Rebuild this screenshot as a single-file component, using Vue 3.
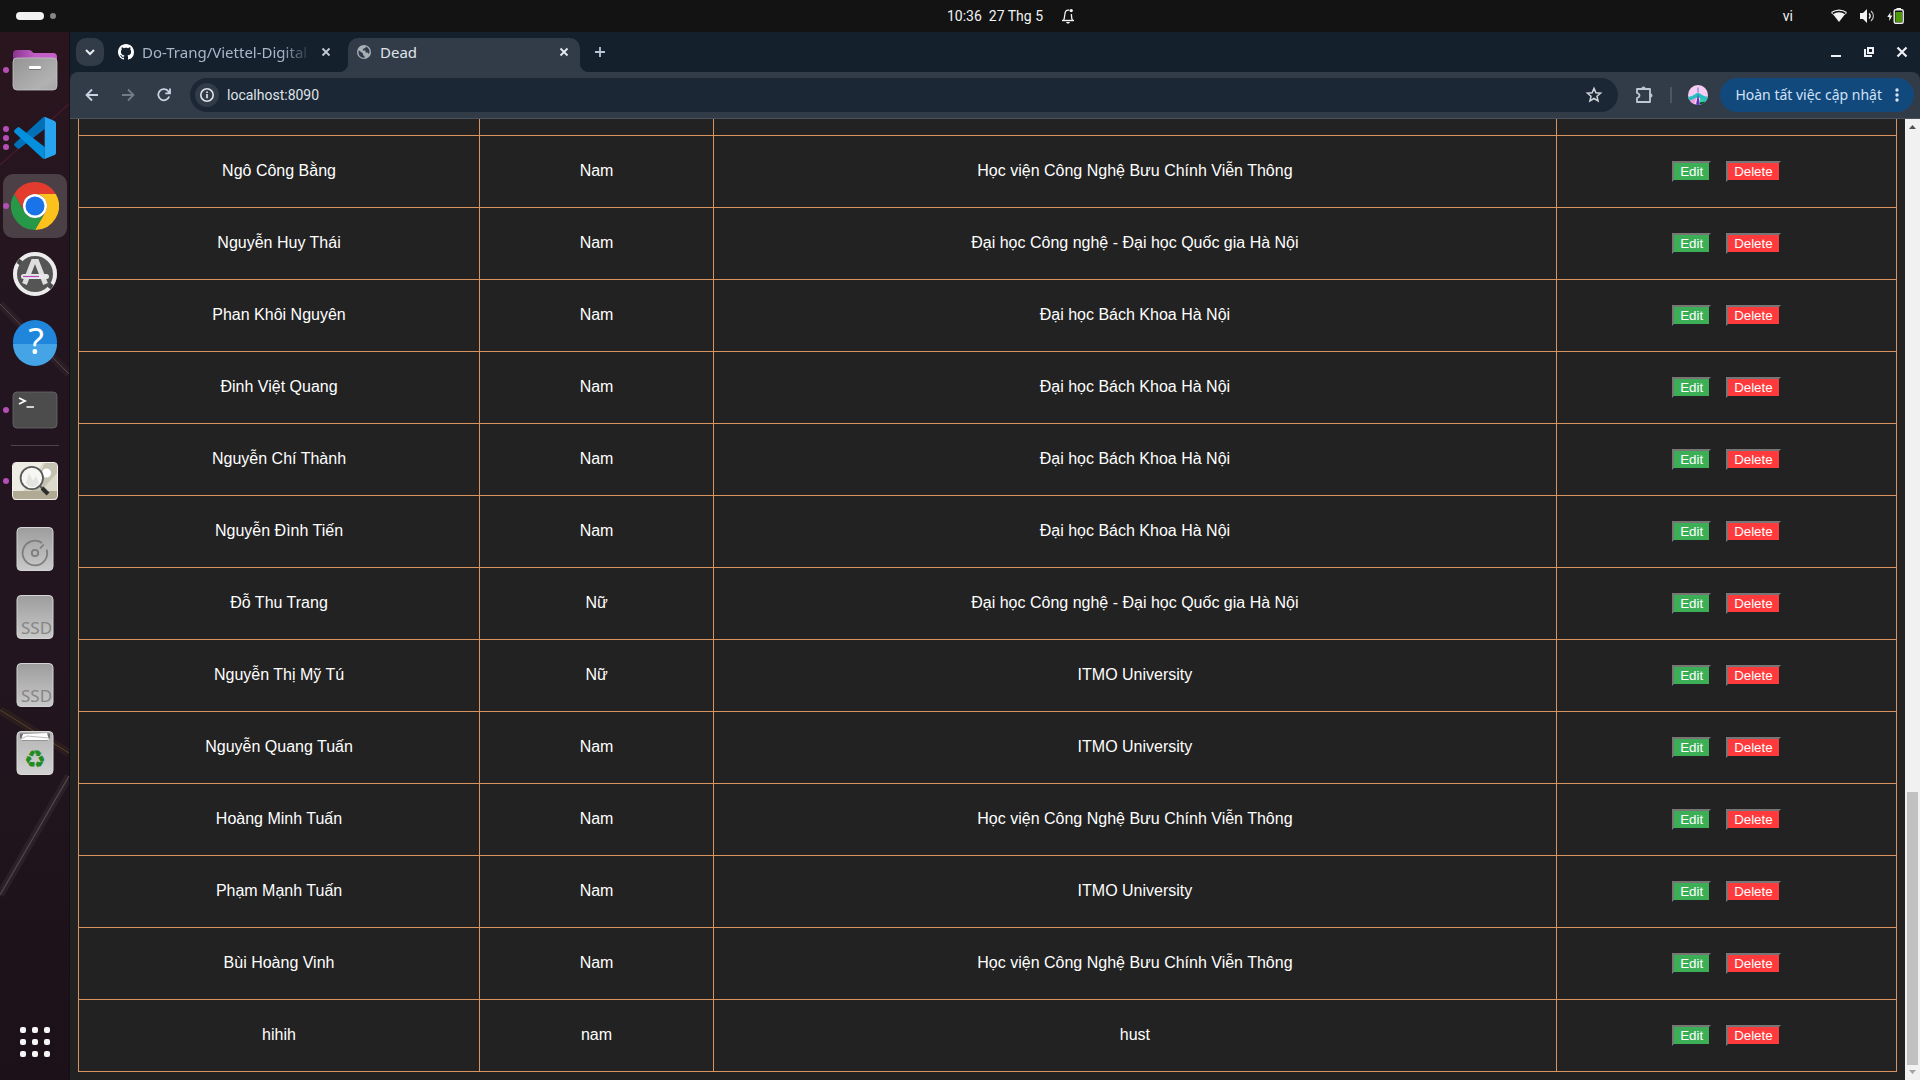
<script setup>
const people = [
  { name: 'Ngô Công Bằng', gender: 'Nam', school: 'Học viện Công Nghệ Bưu Chính Viễn Thông' },
  { name: 'Nguyễn Huy Thái', gender: 'Nam', school: 'Đại học Công nghệ - Đại học Quốc gia Hà Nội' },
  { name: 'Phan Khôi Nguyên', gender: 'Nam', school: 'Đại học Bách Khoa Hà Nội' },
  { name: 'Đinh Việt Quang', gender: 'Nam', school: 'Đại học Bách Khoa Hà Nội' },
  { name: 'Nguyễn Chí Thành', gender: 'Nam', school: 'Đại học Bách Khoa Hà Nội' },
  { name: 'Nguyễn Đình Tiến', gender: 'Nam', school: 'Đại học Bách Khoa Hà Nội' },
  { name: 'Đỗ Thu Trang', gender: 'Nữ', school: 'Đại học Công nghệ - Đại học Quốc gia Hà Nội' },
  { name: 'Nguyễn Thị Mỹ Tú', gender: 'Nữ', school: 'ITMO University' },
  { name: 'Nguyễn Quang Tuấn', gender: 'Nam', school: 'ITMO University' },
  { name: 'Hoàng Minh Tuấn', gender: 'Nam', school: 'Học viện Công Nghệ Bưu Chính Viễn Thông' },
  { name: 'Phạm Mạnh Tuấn', gender: 'Nam', school: 'ITMO University' },
  { name: 'Bùi Hoàng Vinh', gender: 'Nam', school: 'Học viện Công Nghệ Bưu Chính Viễn Thông' },
  { name: 'hihih', gender: 'nam', school: 'hust' },
]
</script>

<template>
  <div class="desktop">
    <header class="topbar">
      <div class="workspaces"><span class="pill"></span><span class="dot"></span></div>
      <div class="clock">
        <span>10:36&nbsp; 27 Thg 5</span>
        <svg width="14" height="16" viewBox="0 0 14 16" fill="none" stroke="#f2f2f2" stroke-width="1">
          <path d="M1 12.5h12" stroke-width="1.4" />
          <path d="M2.6 12C4.2 10 3.2 5 4.8 3.2C5.8 2 7 2 8.2 2.2M11.4 12C10.3 10.5 10.6 8 10.4 6" stroke-width="1.3" />
          <circle cx="10.2" cy="2.6" r="1.7" fill="#f2f2f2" stroke="none" />
          <path d="M5 14h4l-1 1.6H6z" fill="#f2f2f2" stroke="none" />
        </svg>
      </div>
      <div class="status">
        <span class="lang">vi</span>
        <svg width="16" height="14" viewBox="0 0 16 14">
          <path d="M0.5 3.6C5 .2 11 .2 15.5 3.6" fill="none" stroke="#f2f2f2" stroke-width="1.3" />
          <path d="M2 5.3C5.500 2.600 10.500 2.600 14 5.300L8 13z" fill="#f2f2f2" />
          <path d="M.3 3.600L2.300 5.600M15.700 3.600L13.700 5.600" stroke="#f2f2f2" />
        </svg>
        <svg class="volume" width="15" height="14" viewBox="0 0 15 14">
          <path d="M0 4h3l4-4v14L3 10H0z" fill="#f2f2f2" />
          <path d="M9 4.500c1.400 1.500 1.400 3.500 0 5" fill="none" stroke="#f2f2f2" stroke-width="1.4" />
          <path d="M11 2c3.200 3 3.200 7 0 10" fill="none" stroke="#bdbdbd" stroke-width="1.2" />
        </svg>
        <svg class="battery" width="17" height="16" viewBox="0 0 17 16">
          <path d="M3.600 4L.3 9h2v4L5.300 7.600H3.200z" fill="#f2f2f2" />
          <rect x="7.2" y="1.7" width="9" height="13.5" rx="1.5" fill="none" stroke="#f2f2f2" stroke-width="1.4" />
          <rect x="9.5" y="0" width="4.5" height="2" fill="#f2f2f2" />
          <rect x="8.5" y="4" width="6.5" height="10" fill="#4e9a06" />
        </svg>
      </div>
    </header>

    <div class="workarea">
      <nav class="dock" aria-label="Dock">
        <svg class="wallpaper" viewBox="0 0 69 1048" preserveAspectRatio="none" aria-hidden="true">
          <path d="M0 133L69 72" stroke="#4a1a30" stroke-width="1.2" />
          <path d="M0 272L69 342" stroke="#3c2a30" stroke-width="8" opacity=".4" />
          <path d="M0 272L69 342" stroke="#544c4c" stroke-width="1" />
          <path d="M0 678L69 721" stroke="#3d2a20" stroke-width="8" opacity=".4" />
          <path d="M0 678L69 721" stroke="#54452a" stroke-width="1" />
          <path d="M69 744L0 863" stroke="#40323a" stroke-width="8" opacity=".4" />
          <path d="M69 744L0 863" stroke="#4f4a4c" stroke-width="1.2" />
        </svg>

        <button class="app" aria-label="Files">
          <span class="marks"><i></i></span>
          <svg width="48" height="48" viewBox="0 0 48 48">
            <defs>
              <linearGradient id="fb" x2="1"><stop stop-color="#8a3591" /><stop offset=".5" stop-color="#c15fc4" /><stop offset="1" stop-color="#c55fc8" /></linearGradient>
              <linearGradient id="ff" x2="1" y2="1"><stop stop-color="#949494" /><stop offset=".75" stop-color="#b2b2b2" /><stop offset="1" stop-color="#a6a6a6" /></linearGradient>
            </defs>
            <path d="M2 8a4 4 0 0 1 4-4h12q2 0 3 1.500L22.500 7H42q4 0 4 4v12H2z" fill="url(#fb)" />
            <rect x="2" y="12" width="44" height="32" rx="4" fill="url(#ff)" stroke="#c4c4c4" stroke-width=".8" />
            <rect x="18" y="21" width="12" height="3" rx="1" fill="#777" />
            <rect x="18" y="20" width="12" height="3" rx="1" fill="#fff" />
          </svg>
        </button>

        <button class="app" aria-label="Visual Studio Code">
          <span class="marks"><i></i><i></i><i></i></span>
          <svg width="48" height="48" viewBox="0 0 48 48">
            <path d="M33.700 2.700V15L8.500 34.500Q7.500 35.300 6.500 34.500L3.500 31.800Q2.500 30.500 3.500 29.500L31 4.200Q32 3 33.700 2.700z" fill="#0070b8" />
            <path d="M33.700 45V33L8.500 13.500Q7.500 12.700 6.500 13.500L3.500 16Q2.500 17.400 3.500 18.500L31 43.800Q32 45 33.700 45z" fill="#0490dc" />
            <path d="M33.700 2.700L43.600 7Q45 7.800 45 9.200V39Q45 40.400 43.600 41L33.700 45z" fill="#27a5f0" />
          </svg>
        </button>

        <button class="app current" aria-label="Google Chrome">
          <span class="marks"><i></i></span>
          <svg width="48" height="48" viewBox="0 0 48 48">
            <path d="M3.200 12A24 24 0 0 1 44.800 12H24A12 12 0 0 0 13.600 30z" fill="#e33b2e" />
            <path d="M44.800 12A24 24 0 0 1 24 48L34.400 30A12 12 0 0 0 24 12z" fill="#fcc21b" />
            <path d="M24 48A24 24 0 0 1 3.200 12L13.600 30A12 12 0 0 0 34.400 30z" fill="#279847" />
            <circle cx="24" cy="24" r="12" fill="#fff" />
            <circle cx="24" cy="24" r="9.5" fill="#1a73e8" />
          </svg>
        </button>

        <button class="app" aria-label="Software Updater">
          <svg width="48" height="48" viewBox="0 0 48 48">
            <circle cx="24" cy="24" r="22" fill="#555" />
            <circle cx="24" cy="24" r="20" fill="none" stroke="#ececec" stroke-width="4" />
            <path d="M7 14l3-4M38 38l3-4" stroke="#4a4a4a" stroke-width="4" />
            <path d="M13.500 34L22.300 11.500h3.400L34.500 34" fill="none" stroke="#dedede" stroke-width="5" />
            <rect x="10" y="24" width="28" height="5" rx="2.5" fill="#e6e6e6" />
            <path d="M12 26.500h16" stroke="#b347b7" stroke-width="1.2" />
          </svg>
        </button>

        <button class="app" aria-label="Help">
          <svg class="glyph" width="48" height="48" viewBox="0 0 48 48">
            <circle cx="24" cy="24" r="22" fill="#1f86dc" />
            <path d="M2 26a22 22 0 0 0 44 0z" fill="#44a4e6" />
            <text x="25" y="36" text-anchor="middle" class="help-mark">?</text>
          </svg>
        </button>

        <button class="app" aria-label="Terminal">
          <span class="marks"><i></i></span>
          <svg width="48" height="48" viewBox="0 0 48 48">
            <rect x="2" y="6" width="44" height="36" rx="4" fill="#4c4c4c" stroke="#6a6a6a" stroke-width=".8" />
            <path d="M8 12L14 15L8 18" fill="none" stroke="#fff" stroke-width="1.8" />
            <path d="M15.500 21h7.500" stroke="#fff" stroke-width="1.5" />
          </svg>
        </button>

        <div class="divider"></div>

        <button class="app" aria-label="Image Viewer">
          <span class="marks"><i></i></span>
          <svg width="48" height="48" viewBox="0 0 48 48">
            <clipPath id="ph"><rect x="2" y="6" width="44" height="37" rx="3" /></clipPath>
            <g clip-path="url(#ph)">
              <rect x="2" y="6" width="44" height="37" fill="#dcdacb" />
              <path d="M2 6h30L12 34H2z" fill="#eeede4" />
              <path d="M34 6h12v10L30 34H20z" fill="#c5c2b1" />
              <rect x="2" y="34" width="44" height="9" fill="#b0aa94" />
              <circle cx="35.5" cy="16" r="4.5" fill="#fff" />
            </g>
            <rect x="1.5" y="5.5" width="45" height="37" rx="3.5" fill="none" stroke="#f0efe8" />
            <circle cx="20.8" cy="21" r="11.2" fill="#f6f6f3" stroke="#5a5a5a" stroke-width="1.8" />
            <path d="M15 26l3-10 4 8 3-5 3 7q-7 8-13 0z" fill="#e3e3df" />
            <path d="M29 29l2.500 2.500" stroke="#5a5a5a" stroke-width="2" />
            <path d="M31 31l6 6" stroke="#2e2e2e" stroke-width="4" />
          </svg>
        </button>

        <button class="app" aria-label="Disk">
          <svg width="48" height="48" viewBox="0 0 48 48">
            <defs><linearGradient id="dk" x2="0" y2="1"><stop stop-color="#9d9d9d" /><stop offset="1" stop-color="#c9c9c9" /></linearGradient></defs>
            <rect x="6" y="2.5" width="36" height="43" rx="4" fill="url(#dk)" stroke="#d4d4d4" />
            <path d="M31 18A12.300 12.300 0 1 0 35.700 24.500M29 23.500L32.800 19.500" fill="none" stroke="#7d7d7d" stroke-width="1.8" />
            <circle cx="24" cy="28" r="3.2" fill="none" stroke="#7d7d7d" stroke-width="1.8" />
          </svg>
        </button>

        <button v-for="n in 2" :key="n" class="app" aria-label="SSD volume">
          <svg width="48" height="48" viewBox="0 0 48 48">
            <rect x="6" y="2.5" width="36" height="43" rx="4" fill="url(#dk)" stroke="#d4d4d4" />
            <text x="10" y="41" class="ssd-mark">SSD</text>
          </svg>
        </button>

        <button class="app" aria-label="Trash">
          <svg width="48" height="48" viewBox="0 0 48 48">
            <defs><linearGradient id="tr" x2="0" y2="1"><stop stop-color="#b4b4b4" /><stop offset="1" stop-color="#d2d2d2" /></linearGradient></defs>
            <rect x="6" y="2.5" width="36" height="43" rx="4" fill="url(#tr)" stroke="#dadada" />
            <path d="M9 4.500h30v4l-2 3H11l-2-3z" fill="#6f6f6f" />
            <path d="M12 5l24-1 2 7H10z" fill="#fff" />
            <path d="M10 10l6-3 22 2" fill="none" stroke="#bbb" />
            <text x="24" y="39" text-anchor="middle" class="recycle">♻</text>
          </svg>
        </button>

        <button class="app launcher" aria-label="Show Applications">
          <svg width="30" height="30" viewBox="0 0 30 30" fill="#f6f6f6">
            <template v-for="r in 3" :key="r">
              <rect v-for="c in 3" :key="c" :x="(c - 1) * 12" :y="(r - 1) * 12" width="6" height="6" rx="2" />
            </template>
          </svg>
        </button>
      </nav>

      <section class="browser">
        <div class="tabstrip">
          <button class="tab-search" aria-label="Search tabs">
            <svg width="12" height="12" viewBox="0 0 12 12" fill="none" stroke="#e8ebf0" stroke-width="2"><path d="M2 4l4 4 4-4" /></svg>
          </button>
          <div class="tab">
            <svg width="16" height="16" viewBox="0 0 16 16" fill="#fff"><path d="M8 0C3.580 0 0 3.580 0 8c0 3.540 2.290 6.530 5.470 7.590.4.070.55-.17.55-.38 0-.19-.010-.82-.010-1.490-2.010.37-2.530-.49-2.690-.94-.090-.23-.48-.94-.82-1.130-.28-.15-.68-.52-.010-.53.63-.010 1.080.58 1.230.82.72 1.210 1.870.87 2.330.66.070-.52.28-.87.51-1.070-1.780-.2-3.640-.89-3.640-3.950 0-.87.31-1.590.82-2.150-.080-.2-.36-1.020.080-2.120 0 0 .67-.21 2.200.82.64-.18 1.320-.27 2-.27s1.360.090 2 .27c1.530-1.040 2.200-.82 2.200-.82.44 1.100.16 1.920.080 2.120.51.56.82 1.270.82 2.150 0 3.070-1.870 3.750-3.650 3.950.29.25.54.73.54 1.480 0 1.070-.010 1.930-.010 2.200 0 .21.15.46.55.38A8.010 8.010 0 0 0 16 8c0-4.420-3.580-8-8-8z" /></svg>
            <span class="title faded">Do-Trang/Viettel-Digital</span>
            <button class="icon" aria-label="Close tab">
              <svg width="10" height="10" viewBox="0 0 10 10" stroke="#c3cad6" stroke-width="1.8"><path d="M1.500 1.500l7 7M8.500 1.500l-7 7" /></svg>
            </button>
          </div>
          <div class="tab active">
            <svg width="16" height="16" viewBox="0 0 16 16">
              <circle cx="8" cy="8" r="7" fill="#a9afb6" />
              <path d="M2.800 6.300L7 9.500V11L8.500 12.200V14Q3 13.500 2.400 8.500zM10 2.400Q9.800 4.500 7.500 4.500L6.500 6.500H9.500V8.500H11.500L12.700 10Q14 8 13.500 6.500Q12.500 3.500 10 2.400z" fill="#323c49" />
            </svg>
            <span class="title">Dead</span>
            <button class="icon" aria-label="Close tab">
              <svg width="10" height="10" viewBox="0 0 10 10" stroke="#e6e9ee" stroke-width="1.8"><path d="M1.500 1.500l7 7M8.500 1.500l-7 7" /></svg>
            </button>
          </div>
          <button class="icon new-tab" aria-label="New tab">
            <svg width="12" height="12" viewBox="0 0 12 12" stroke="#b9c3d4" stroke-width="1.8"><path d="M1 6h10M6 1v10" /></svg>
          </button>
          <div class="window-buttons">
            <button class="icon" aria-label="Minimize"><svg width="12" height="12" viewBox="0 0 12 12"><path d="M1 10h10" stroke="#eef0f4" stroke-width="2" /></svg></button>
            <button class="icon" aria-label="Restore"><svg width="12" height="12" viewBox="0 0 12 12" fill="none" stroke="#eef0f4" stroke-width="2"><path d="M5 2h5v5H5zM2 3v7h7" /></svg></button>
            <button class="icon" aria-label="Close window"><svg width="12" height="12" viewBox="0 0 12 12" stroke="#eef0f4" stroke-width="2.2"><path d="M1.500 1.500l9 9M10.500 1.500l-9 9" /></svg></button>
          </div>
        </div>

        <div class="toolbar-wrap">
          <div class="toolbar">
            <button class="icon" aria-label="Back"><svg width="14" height="14" viewBox="0 0 14 14" fill="none" stroke="#c9d2e2" stroke-width="1.8"><path d="M13 7H2M7 1.500L1.500 7L7 12.500" /></svg></button>
            <button class="icon" aria-label="Forward"><svg width="14" height="14" viewBox="0 0 14 14" fill="none" stroke="#727b89" stroke-width="1.8"><path d="M1 7h11M7 1.500L12.500 7L7 12.500" /></svg></button>
            <button class="icon" aria-label="Reload"><svg width="14" height="14" viewBox="0 0 14 14" fill="none" stroke="#c9d2e2" stroke-width="1.8"><path d="M12.200 8.500A5.600 5.600 0 1 1 11.500 3.500L12.500 5M13 .5V5.300H8.300" /></svg></button>
            <div class="omnibox">
              <button class="site-info" aria-label="Site information">
                <svg width="16" height="16" viewBox="0 0 16 16" fill="none" stroke="#dfe3ea"><circle cx="8" cy="8" r="6.2" stroke-width="1.6" /><path d="M8 7v4.300M8 4.500v1.600" stroke-width="1.7" /></svg>
              </button>
              <input type="text" value="localhost:8090" aria-label="Address">
              <button class="icon" aria-label="Bookmark"><svg width="18" height="18" viewBox="0 0 18 18" fill="none" stroke="#cfd3da" stroke-width="1.5"><path d="M9 2.400l1.900 4.400 4.700.4-3.600 3.100 1.100 4.700L9 12.500 4.900 15 6 10.300 2.400 7.200l4.700-.4z" /></svg></button>
            </div>
            <button class="icon" aria-label="Extensions"><svg width="18" height="18" viewBox="0 0 18 18" fill="none" stroke="#c0c7d4" stroke-width="1.8"><path d="M2 3h13v13H2v-4q2.500-.8 2.500-2.500T2 7z" stroke-linejoin="round" /><path d="M6.500 3a2 2 0 0 1 4 0zM15 7.500a2 2 0 0 1 0 4z" fill="#c0c7d4" stroke-width="1" /></svg></button>
            <span class="rule"></span>
            <button class="icon" aria-label="Profile">
              <svg width="20" height="20" viewBox="0 0 20 20">
                <clipPath id="av"><circle cx="10" cy="10" r="10" /></clipPath>
                <g clip-path="url(#av)">
                  <rect width="20" height="20" fill="#f5cdf2" />
                  <path d="M0 12l4-1 5-3h2l5 3 4 1v4l-5-1-5-3-5 3-5 1z" fill="#27bfc0" />
                  <path d="M3 15l5-2-2 7H2z" fill="#f29bdc" />
                  <path d="M12 13l7 3v4h-7z" fill="#2fd0b0" />
                  <path d="M10 9l2 11H8z" fill="#5a35b4" />
                  <path d="M10 2.500v5" stroke="#6a6ac2" />
                  <path d="M12 17.500l5-1 1 3h-6z" fill="#104a22" />
                </g>
              </svg>
            </button>
            <button class="update">
              <span>Hoàn tất việc cập nhật</span>
              <svg width="4" height="16" viewBox="0 0 4 16" fill="#d5e4f7"><circle cx="2" cy="3" r="1.7" /><circle cx="2" cy="8" r="1.7" /><circle cx="2" cy="13" r="1.7" /></svg>
            </button>
          </div>
        </div>

        <div class="viewport">
          <main class="page">
            <table>
              <colgroup><col class="c-name"><col class="c-gender"><col class="c-school"><col></colgroup>
              <tbody>
                <tr><td></td><td></td><td></td><td></td></tr>
                <tr v-for="p in people" :key="p.name">
                  <td>{{ p.name }}</td>
                  <td>{{ p.gender }}</td>
                  <td>{{ p.school }}</td>
                  <td class="controls">
                    <div class="actions">
                      <button class="action edit">Edit</button>
                      <button class="action delete">Delete</button>
                    </div>
                  </td>
                </tr>
              </tbody>
            </table>
          </main>
          <div class="scrollbar" aria-hidden="true">
            <svg width="15" height="15" viewBox="0 0 15 15"><path d="M4 10h7L7.500 6z" fill="#505050" /></svg>
            <div class="track"><div class="thumb"></div></div>
            <svg width="15" height="15" viewBox="0 0 15 15"><path d="M4 5h7L7.500 9z" fill="#a3a3a3" /></svg>
          </div>
        </div>
      </section>
    </div>
  </div>
</template>

<style>
body {
  margin: 0;
  background: #222;
}
</style>

<style scoped>
.desktop {
  display: flex;
  flex-direction: column;
  height: 100vh;
  overflow: hidden;
  font-family: "Noto Sans", "Open Sans", sans-serif;
  font-size: 14px;
  color: #f2f2f2;
}
button {
  font-family: inherit;
  margin: 0;
  padding: 0;
  border: 0;
  background: none;
  color: inherit;
}
svg {
  display: block;
  flex: none;
}

/* Top bar */
.topbar {
  display: grid;
  grid-template-columns: 1fr auto 1fr;
  align-items: center;
  flex: none;
  height: 32px;
  padding: 0 16px;
  background: #131313;
  font-family: Roboto, sans-serif;
}
.workspaces {
  display: flex;
  align-items: center;
  gap: 6px;
}
.pill {
  width: 28px;
  height: 8px;
  border-radius: 4px;
  background: #f2f2f2;
}
.dot {
  width: 6px;
  height: 6px;
  border-radius: 3px;
  background: #868686;
}
.clock {
  display: flex;
  align-items: center;
  gap: 18px;
  margin-left: 102px;
  line-height: 30px;
}
.status {
  display: flex;
  align-items: center;
  justify-content: flex-end;
}
.lang {
  margin-right: 38px;
  line-height: 30px;
}
.volume {
  margin-left: 13px;
}
.battery {
  margin-left: 12px;
}

/* Dock */
.workarea {
  display: flex;
  flex: 1;
  min-height: 0;
}
.dock {
  position: relative;
  display: flex;
  flex-direction: column;
  flex: none;
  box-sizing: border-box;
  width: 70px;
  padding: 4px 0;
  border-right: 1px solid #131013;
  background: linear-gradient(#2a151e, #22151f 30%, #22151f 60%, #1c1118);
}
.wallpaper {
  position: absolute;
  top: 0;
  left: 0;
  width: 69px;
  height: 100%;
}
.app {
  position: relative;
  display: flex;
  align-items: center;
  justify-content: center;
  flex: none;
  width: 64px;
  height: 64px;
  margin: 2px 3px;
  border-radius: 10px;
}
.app.current {
  background: #4c4047;
}
.launcher {
  margin-top: auto;
}
.marks {
  position: absolute;
  top: 0;
  bottom: 0;
  left: 0;
  display: flex;
  flex-direction: column;
  justify-content: center;
  gap: 3px;
}
.marks i {
  width: 6px;
  height: 6px;
  border-radius: 3px;
  background: #b44fb5;
}
.divider {
  flex: none;
  height: 1px;
  margin: 1px 10px 1px 11px;
  background: #4d434a;
}
.glyph {
  overflow: visible;
}
.help-mark {
  font-size: 36px;
  fill: #fff;
}
.ssd-mark {
  font-size: 17px;
  fill: #868686;
}
.recycle {
  font-family: "DejaVu Sans", sans-serif;
  font-size: 25px;
  fill: #218a21;
}

/* Browser chrome */
.browser {
  display: flex;
  flex: 1;
  flex-direction: column;
  min-width: 0;
}
.icon {
  display: flex;
  align-items: center;
  justify-content: center;
  flex: none;
  width: 20px;
  height: 20px;
}
.tabstrip {
  display: flex;
  align-items: stretch;
  flex: none;
  box-sizing: border-box;
  height: 40px;
  padding: 6px 8px 0 6px;
  background: #15202d;
}
.tab-search {
  display: flex;
  align-items: center;
  justify-content: center;
  width: 28px;
  height: 28px;
  border-radius: 10px;
  background: #323c49;
}
.tab {
  position: relative;
  display: flex;
  align-items: center;
  box-sizing: border-box;
  width: 236px;
  margin-left: 4px;
  padding: 0 8px 6px 10px;
  color: #a9b6c9;
  font-size: 15px;
}
.tab.active {
  width: 232px;
  margin-left: 4px;
  padding: 0 6px 6px 8px;
  border-radius: 10px 10px 0 0;
  background: #323c49;
  color: #dfe3e9;
}
.tab.active::before,
.tab.active::after {
  content: "";
  position: absolute;
  bottom: 0;
  width: 10px;
  height: 10px;
}
.tab.active::before {
  right: 100%;
  background: radial-gradient(circle at 0 0, #15202d 10px, #323c49 11px);
}
.tab.active::after {
  left: 100%;
  background: radial-gradient(circle at 100% 0, #15202d 10px, #323c49 11px);
}
.title {
  flex: 1;
  margin: 0 4px 0 8px;
  white-space: nowrap;
  line-height: 20px;
}
.faded {
  -webkit-mask-image: linear-gradient(90deg, #000 82%, transparent);
  mask-image: linear-gradient(90deg, #000 82%, transparent);
}
.new-tab {
  height: 28px;
  margin-left: 10px;
}
.window-buttons {
  display: flex;
  align-items: center;
  gap: 13px;
  height: 28px;
  margin-left: auto;
}
.toolbar-wrap {
  flex: none;
  background: #15202d;
}
.toolbar {
  display: flex;
  align-items: center;
  box-sizing: border-box;
  height: 47px;
  padding: 0 6px 0 12px;
  gap: 16px;
  border-bottom: 1px solid #4a515b;
  border-radius: 8px 8px 0 0;
  background: #323c49;
}
.omnibox {
  display: flex;
  align-items: center;
  flex: 1;
  box-sizing: border-box;
  height: 34px;
  padding: 0 14px 0 5px;
  border-radius: 17px;
  background: #1c2735;
}
.site-info {
  display: flex;
  align-items: center;
  justify-content: center;
  width: 24px;
  height: 24px;
  border-radius: 12px;
  background: #323c49;
}
.omnibox input {
  flex: 1;
  min-width: 0;
  margin-left: 8px;
  padding: 0;
  border: 0;
  outline: 0;
  background: none;
  color: #dfe3e9;
  font: 14px/20px Roboto, sans-serif;
}
.rule {
  width: 2px;
  height: 16px;
  background: #4b5666;
}
.update {
  display: flex;
  align-items: center;
  gap: 13px;
  height: 34px;
  margin-left: -4px;
  padding: 0 15px;
  border-radius: 17px;
  background: #12497d;
  color: #cfe2f9;
  font-size: 14px;
}
.update span {
  padding-bottom: 2px;
}

/* Page */
.viewport {
  display: flex;
  flex: 1;
  min-height: 0;
  background: #222;
}
.page {
  display: flex;
  flex: 1;
  flex-direction: column;
  justify-content: flex-end;
  min-width: 0;
  padding: 0 8px 8px;
  overflow: hidden;
  font: 16px/18px "Liberation Sans", Arial, sans-serif;
  color: #fff;
}
table {
  flex: none;
  width: 100%;
  border-collapse: collapse;
  table-layout: fixed;
}
.c-name {
  width: 22.06%;
}
.c-gender {
  width: 12.87%;
}
.c-school {
  width: 46.36%;
}
tr {
  height: 72px;
}
td {
  padding: 0 0 2px;
  border: 1px solid #d99460;
  text-align: center;
  vertical-align: middle;
}
td.controls {
  padding: 0;
}
.actions {
  display: flex;
  justify-content: center;
  gap: 15px;
}
.action {
  padding: 1px 6px;
  border: 2px solid;
  border-color: #767676 #222 #222 #767676;
  color: #fff;
  line-height: 15px;
}
.edit {
  background: #3cae56;
}
.delete {
  background: #ff3a3d;
}
.scrollbar {
  display: flex;
  flex-direction: column;
  flex: none;
  width: 15px;
  background: #f1f1f1;
}
.track {
  display: flex;
  flex: 1;
  flex-direction: column;
  justify-content: flex-end;
  padding: 0 2px;
}
.thumb {
  height: 29.3%;
  background: #c1c1c1;
}
</style>
